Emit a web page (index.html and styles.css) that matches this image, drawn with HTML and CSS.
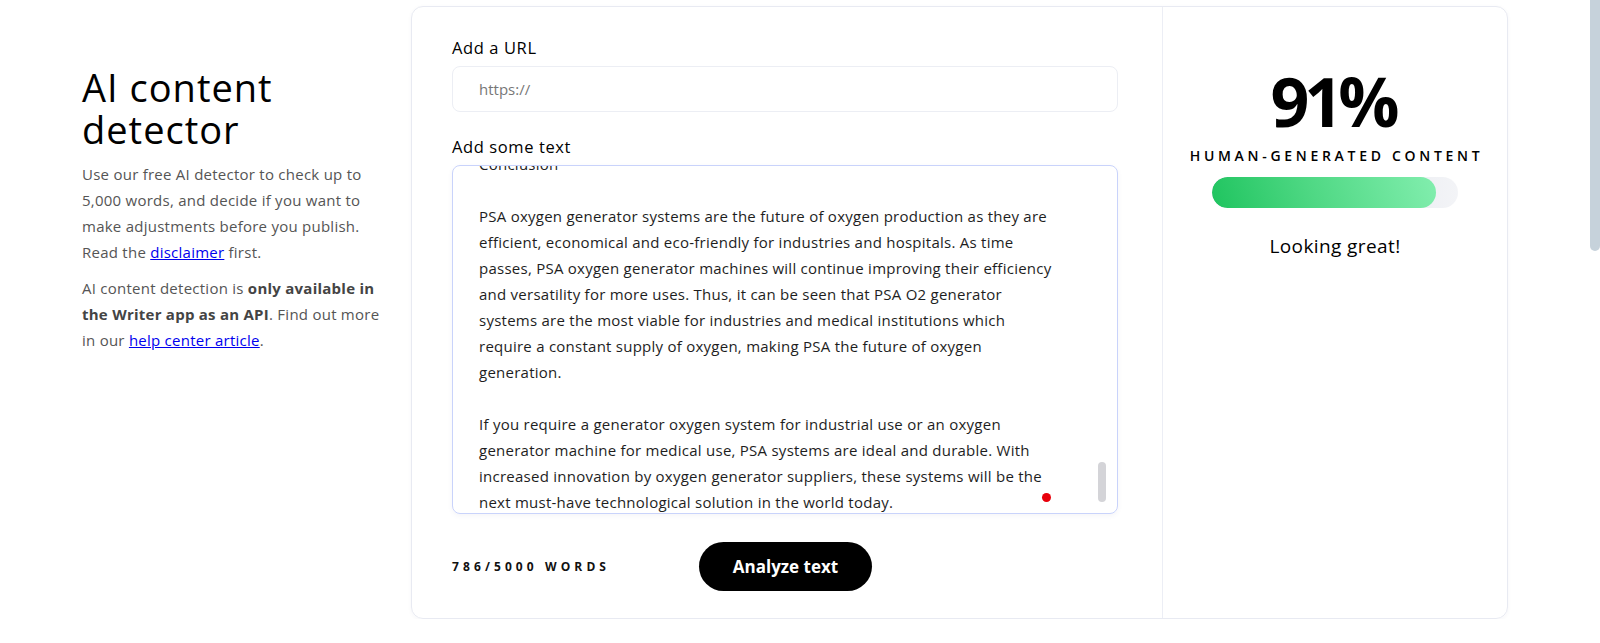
FILE: index.html
```html
<!DOCTYPE html>
<html lang="en">
<head>
<meta charset="utf-8">
<title>AI content detector</title>
<link rel="stylesheet" href="styles.css">
</head>
<body>
<div class="page">
  <aside class="intro">
    <h1 class="title">AI content<br>detector</h1>
    <p class="desc">Use our free AI detector to check up to<br>5,000 words, and decide if you want to<br>make adjustments before you publish.<br>Read the <a href="#">disclaimer</a> first.</p>
    <p class="desc">AI content detection is <b>only available in<br>the Writer app as an API</b>. Find out more<br>in our <a href="#">help center article</a>.</p>
  </aside>
  <main class="card">
    <section class="editor">
      <div class="label">Add a URL</div>
      <div class="url-input"><span class="placeholder">https://</span></div>
      <div class="label label-text">Add some text</div>
      <div class="textbox">
        <div class="text">
          <p class="para">Conclusion</p>
          <p class="para">PSA oxygen generator systems are the future of oxygen production as they are<br>efficient, economical and eco-friendly for industries and hospitals. As time<br>passes, PSA oxygen generator machines will continue improving their efficiency<br>and versatility for more uses. Thus, it can be seen that PSA O2 generator<br>systems are the most viable for industries and medical institutions which<br>require a constant supply of oxygen, making PSA the future of oxygen<br>generation.</p>
          <p class="para">If you require a generator oxygen system for industrial use or an oxygen<br>generator machine for medical use, PSA systems are ideal and durable. With<br>increased innovation by oxygen generator suppliers, these systems will be the<br>next must-have technological solution in the world today.</p>
        </div>
        <div class="scroll-thumb"></div>
        <div class="red-dot"></div>
      </div>
      <div class="actions">
        <div class="count">786/5000 WORDS</div>
        <button class="analyze">Analyze text</button>
      </div>
    </section>
    <section class="result">
      <div class="score">91%</div>
      <div class="score-label">HUMAN-GENERATED CONTENT</div>
      <div class="bar"><div class="bar-fill" style="width:91%"></div></div>
      <div class="verdict">Looking great!</div>
    </section>
  </main>
</div>
<div class="page-scroll"></div>
</body>
</html>
```

FILE: styles.css
```css
* { box-sizing: border-box; }
html, body { margin: 0; padding: 0; background: #fff; }
body {
  font-family: "Open Sans", "Noto Sans", sans-serif;
  color: #000;
  overflow: hidden;
}
.page {
  display: flex;
  align-items: flex-start;
  padding: 6px 82px 0 82px;
}
.intro {
  width: 300px;
  margin-right: 29px;
  padding-top: 60px;
  flex: none;
}
.title {
  margin: 0;
  font-size: 38px;
  line-height: 42px;
  font-weight: 400;
  color: #000;
  letter-spacing: 1px;
}
.desc {
  margin: 11px 0 0;
  font-size: 15px;
  line-height: 26px;
  letter-spacing: 0.25px;
  color: #555;
  white-space: nowrap;
}
.desc + .desc { margin-top: 10px; }
.desc b { font-weight: 700; color: #444; }
.desc a { color: #0000ee; text-decoration: underline; }

.card {
  flex: none;
  width: 1097px;
  height: 613px;
  display: flex;
  border: 1px solid #e8eaf2;
  border-radius: 12px;
  box-shadow: 0 1px 4px rgba(40, 50, 90, 0.04);
}
.editor {
  width: 750px;
  flex: none;
  padding: 29px 44px 0 40px;
}
.label {
  font-size: 16.5px;
  line-height: 24px;
  letter-spacing: 0.6px;
  color: #000;
  margin-bottom: 6px;
}
.label-text { margin-top: 23px; }
.url-input {
  height: 46px;
  border: 1px solid #eceef4;
  border-radius: 8px;
  display: flex;
  align-items: center;
  padding-left: 26px;
}
.placeholder {
  font-size: 15px;
  color: #777;
}
.textbox {
  position: relative;
  height: 349px;
  border: 1px solid #c9d3fb;
  border-radius: 8px;
  overflow: hidden;
  padding: 0 26px;
  box-shadow: 0 2px 5px rgba(80, 90, 140, 0.06);
}
.text {
  margin-top: -15px;
  font-size: 15px;
  line-height: 26px;
  letter-spacing: 0.25px;
  color: #1e1e1e;
  white-space: nowrap;
}
.para { margin: 0 0 26px; }
.scroll-thumb {
  position: absolute;
  right: 11px;
  bottom: 11px;
  width: 8px;
  height: 40px;
  border-radius: 4px;
  background: #d4d4d8;
}
.red-dot {
  position: absolute;
  right: 66px;
  bottom: 11px;
  width: 9px;
  height: 9px;
  border-radius: 50%;
  background: #e8000b;
}
.actions {
  display: flex;
  align-items: center;
  margin-top: 28px;
}
.count {
  width: 247px;
  font-size: 12px;
  font-weight: 700;
  letter-spacing: 4.1px;
  color: #111;
}
.analyze {
  width: 173px;
  height: 49px;
  border: none;
  border-radius: 25px;
  background: #000;
  color: #fff;
  font-family: inherit;
  font-size: 17px;
  font-weight: 700;
  letter-spacing: 0;
  cursor: pointer;
}
.result {
  flex: 1;
  border-left: 1px solid #eceef5;
  padding-top: 59px;
  text-align: center;
}
.score {
  font-size: 68px;
  line-height: 70px;
  font-weight: 700;
  color: #000;
  letter-spacing: -5px;
  padding-right: 5px;
}
.score-label {
  margin-top: 10px;
  font-size: 14px;
  line-height: 20px;
  font-weight: 600;
  letter-spacing: 3.7px;
  color: #000;
  padding-left: 3px;
}
.bar {
  width: 246px;
  height: 31px;
  margin: 11px auto 0;
  border-radius: 16px;
  background: linear-gradient(90deg, #dcdee8 0%, #e7e9ef 60%, #f3f4f7 100%);
  overflow: hidden;
}
.bar-fill {
  height: 100%;
  border-radius: 16px;
  background: linear-gradient(70deg, #1fc45f 0%, #4fd884 45%, #82eeae 100%);
}
.verdict {
  margin-top: 26px;
  font-size: 19px;
  line-height: 24px;
  letter-spacing: 0.4px;
  color: #000;
}
.page-scroll {
  position: fixed;
  top: 0;
  right: 0;
  width: 10px;
  height: 251px;
  border-radius: 0 0 5px 5px;
  background: #c6d2db;
}
```
